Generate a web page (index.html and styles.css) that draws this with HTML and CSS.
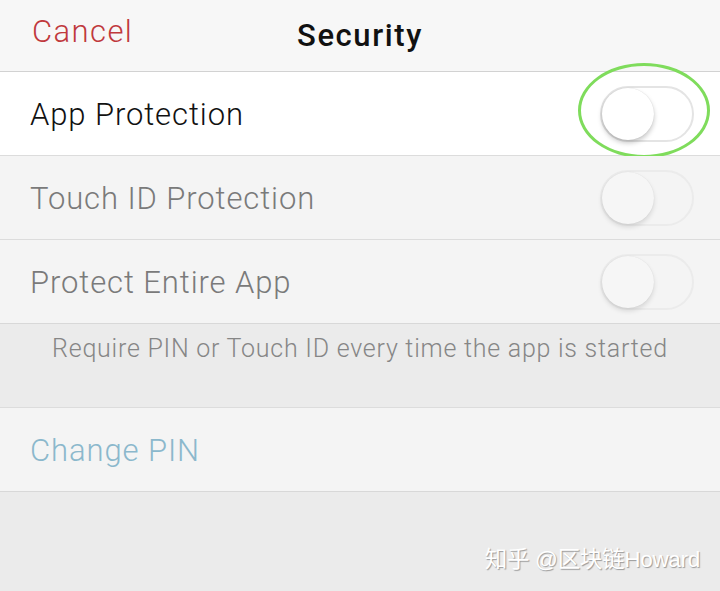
FILE: index.html
```html
<!DOCTYPE html>
<html>
<head>
<meta charset="utf-8">
<link rel="stylesheet" href="styles.css">
</head>
<body>
<div class="screen">
  <header class="nav">
    <span class="cancel">Cancel</span>
    <span class="title">Security</span>
  </header>
  <section class="group">
    <div class="row active">
      <span class="label">App Protection</span>
      <span class="toggle"><span class="knob"></span></span>
      <span class="highlight"></span>
    </div>
    <div class="row disabled">
      <span class="label">Touch ID Protection</span>
      <span class="toggle"><span class="knob"></span></span>
    </div>
    <div class="row disabled last">
      <span class="label">Protect Entire App</span>
      <span class="toggle"><span class="knob"></span></span>
    </div>
  </section>
  <p class="note">Require PIN or Touch ID every time the app is started</p>
  <section class="group">
    <div class="row disabled last">
      <span class="label link">Change PIN</span>
    </div>
  </section>
  <div class="watermark">知乎 @区块链Howard</div>
</div>
</body>
</html>
```
FILE: styles.css
```css
html, body {
  margin: 0;
  padding: 0;
}
body {
  width: 720px;
  height: 591px;
  background: #ebebeb;
  font-family: Roboto, "Liberation Sans", "Noto Sans CJK SC", sans-serif;
  overflow: hidden;
}
.screen {
  position: relative;
  height: 591px;
  display: flex;
  flex-direction: column;
}
.nav {
  background: #f7f7f7;
  border-bottom: 1px solid #d2d2d2;
  position: relative;
  box-sizing: border-box;
  height: 72px;
}
.cancel {
  position: absolute;
  left: 32px;
  top: 13px;
  font-size: 31px;
  color: #c0393d;
  font-weight: 300;
  letter-spacing: 1.4px;
}
.title {
  position: absolute;
  left: 0;
  right: 0;
  top: 17px;
  text-align: center;
  font-size: 31px;
  font-weight: 500;
  color: #111;
  letter-spacing: 1.6px;
}
.group {
  display: flex;
  flex-direction: column;
}
.row {
  position: relative;
  height: 84px;
  box-sizing: border-box;
  border-bottom: 1px solid #dcdcdc;
  display: flex;
  align-items: center;
  justify-content: space-between;
  padding: 0 26px 0 30px;
  background: #f4f4f4;
}
.row.active {
  background: #ffffff;
}
.row.last {
  border-bottom: 1px solid #d8d8d8;
}
.label {
  font-size: 31px;
  font-weight: 300;
  color: #7a7a7a;
  margin-top: 2px;
  letter-spacing: 0.9px;
}
.active .label {
  color: #111;
}
.label.link {
  color: #8bb8cc;
}
.toggle {
  width: 94px;
  height: 56px;
  border-radius: 28px;
  border: 2px solid #e4e4e4;
  box-sizing: border-box;
  position: relative;
  background: transparent;
}
.disabled .toggle {
  border-color: #ebebeb;
}
.knob {
  position: absolute;
  left: 0;
  top: 0;
  width: 52px;
  height: 52px;
  border-radius: 50%;
  background: #fff;
  box-shadow: 0 3px 5px rgba(0,0,0,0.22), 0 0 1px rgba(0,0,0,0.15);
}
.disabled .knob {
  background: #f6f6f6;
  box-shadow: 0 3px 5px rgba(0,0,0,0.12), 0 0 1px rgba(0,0,0,0.1);
}
.highlight {
  position: absolute;
  left: 578px;
  top: -9px;
  width: 132px;
  height: 95px;
  border: 3px solid #7fdc5c;
  border-radius: 50%;
  box-sizing: border-box;
}
.note {
  margin: 0;
  height: 84px;
  box-sizing: border-box;
  padding-top: 10px;
  text-align: center;
  font-size: 25px;
  font-weight: 300;
  color: #868686;
  letter-spacing: 0.75px;
  border-bottom: 1px solid #dcdcdc;
}
.watermark {
  position: absolute;
  right: 20px;
  top: 541px;
  font-size: 22.5px;
  color: #fff;
  text-shadow: 1px 1px 1px rgba(0,0,0,0.35);
  font-family: "Liberation Sans", "Noto Sans CJK SC", sans-serif;
  letter-spacing: -0.3px;
}
```
